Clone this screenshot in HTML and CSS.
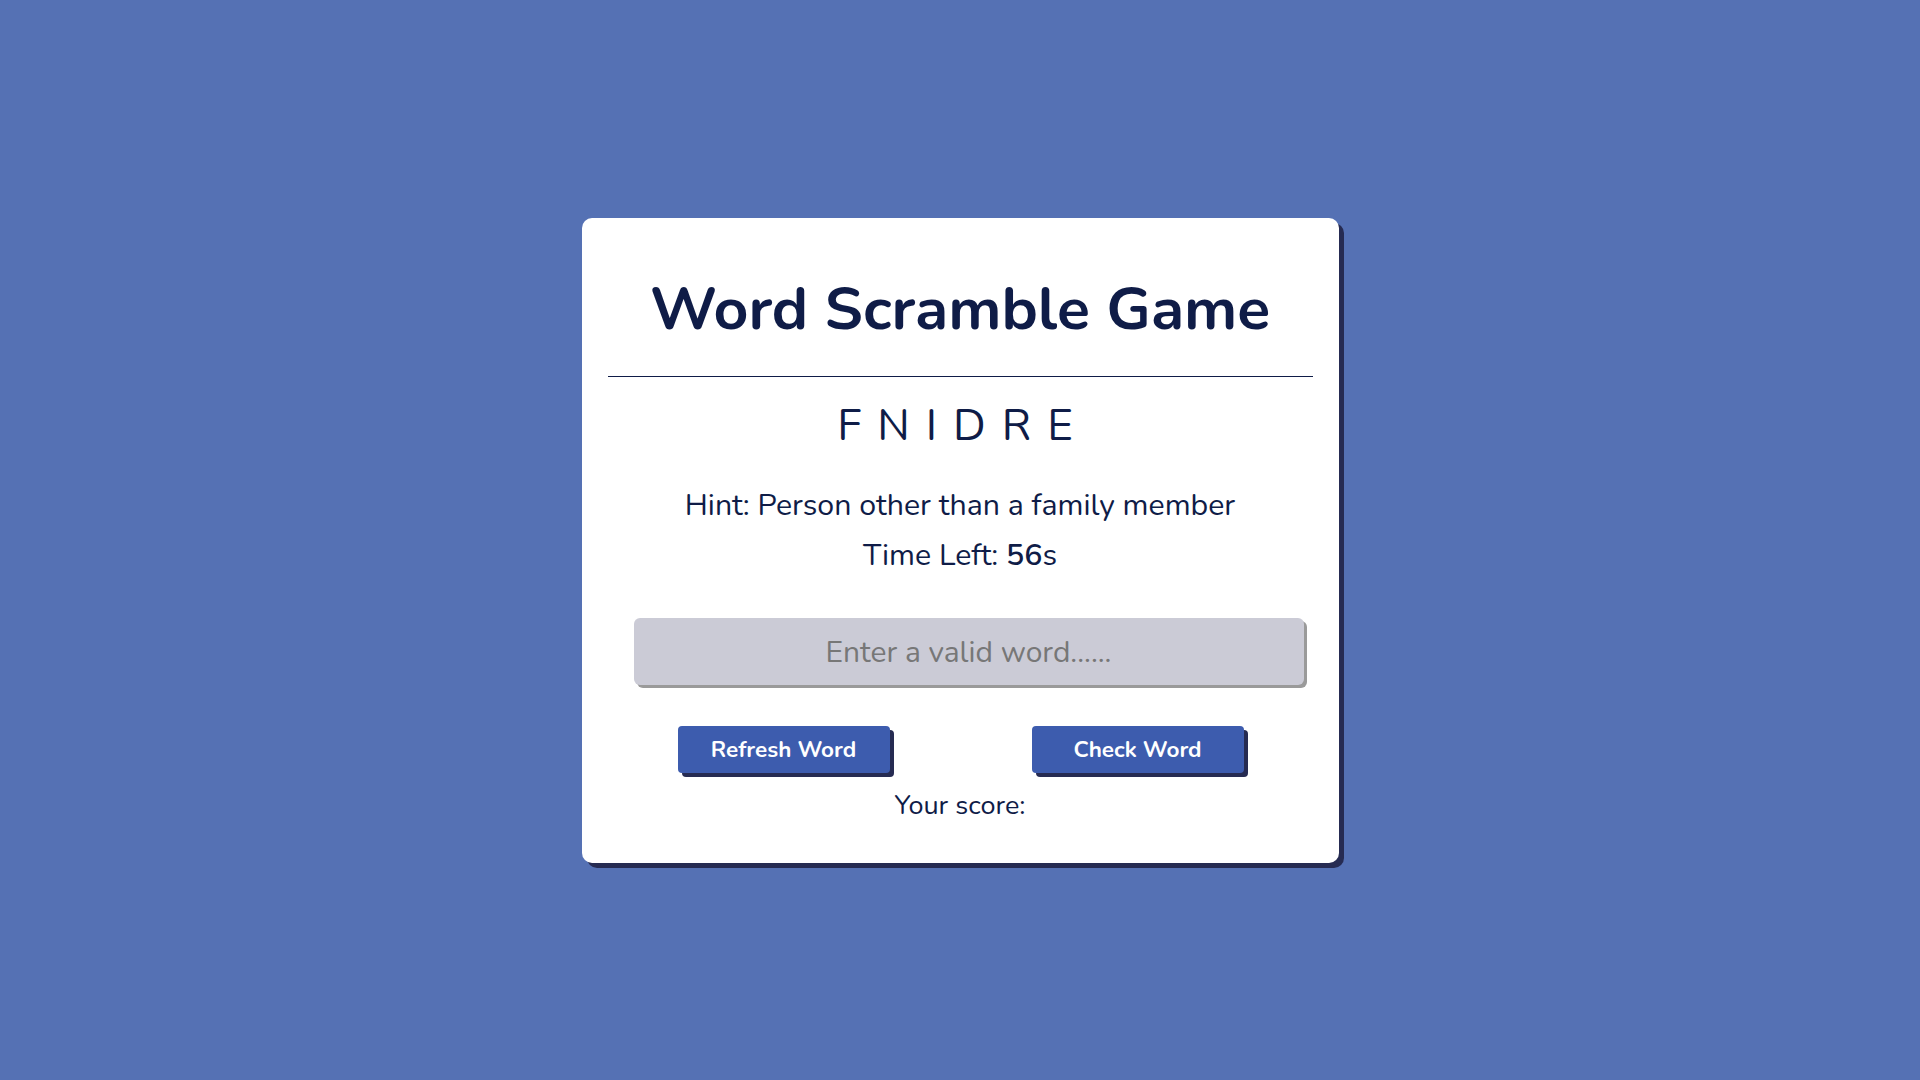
FILE: index.html
```html
<!DOCTYPE html>
<html lang="en">
<head>
<meta charset="utf-8">
<title>Word Scramble Game</title>
<link rel="stylesheet" href="styles.css">
</head>
<body>
<div class="card">
  <h1 class="title">Word Scramble Game</h1>
  <div class="rule"></div>
  <p class="word">FNIDRE</p>
  <div class="details">
    <p class="hint">Hint: <span>Person other than a family member</span></p>
    <p class="time">Time Left: <b>56</b>s</p>
  </div>
  <input class="guess" type="text" placeholder="Enter a valid word......">
  <div class="buttons">
    <button class="btn">Refresh Word</button>
    <button class="btn">Check Word</button>
  </div>
  <p class="score">Your score:</p>
</div>
</body>
</html>
```
FILE: styles.css
```css
* { box-sizing: border-box; }
html, body { height: 100%; }
body {
  margin: 0;
  background: #5571b4;
  font-family: "Nunito", "Lato", "Noto Sans", sans-serif;
  color: #0f1c47;
  display: flex;
  align-items: center;
  justify-content: center;
}
.card {
  width: 757px;
  background: #fff;
  border-radius: 10px;
  box-shadow: 5px 5px 0 #262b52;
  padding: 56px 26px 42px;
  display: flex;
  flex-direction: column;
  text-align: center;
}
.title {
  margin: 0;
  font-size: 60.7px;
  line-height: 70px;
  font-weight: 700;
}
.rule {
  margin-top: 32px;
  border-top: 1px solid #0f1c47;
}
.word {
  margin: 23px 0 0;
  font-size: 44px;
  line-height: 52px;
  font-weight: 400;
  letter-spacing: 16px;
  text-indent: 6px;
}
.details { margin-top: 33px; }
.details p {
  margin: 0;
  font-size: 30.3px;
  line-height: 40px;
}
.details .time { margin-top: 10px; }
.time b { font-weight: 600; }
.guess {
  margin: 43px 0 0 26px;
  width: 670px;
  height: 67px;
  padding: 3px 0 0;
  border: none;
  outline: none;
  border-radius: 6px;
  background: #cbcbd6;
  box-shadow: 3px 3px 0 #9a9a9a;
  font-family: inherit;
  font-size: 30px;
  text-align: center;
  color: #0f1c47;
}
.guess::placeholder { color: #777; }
.buttons {
  margin-top: 41px;
  padding: 0 69px 0 70px;
  display: flex;
  justify-content: space-between;
}
.btn {
  width: 212px;
  height: 47px;
  border: none;
  border-radius: 4px;
  background: #3d5cae;
  color: #fff;
  font-family: inherit;
  font-size: 22.5px;
  font-weight: 700;
  box-shadow: 4px 4px 0 #262b52;
  cursor: pointer;
}
.score {
  margin: 18px 0 0;
  font-size: 27px;
  line-height: 30px;
}
```
